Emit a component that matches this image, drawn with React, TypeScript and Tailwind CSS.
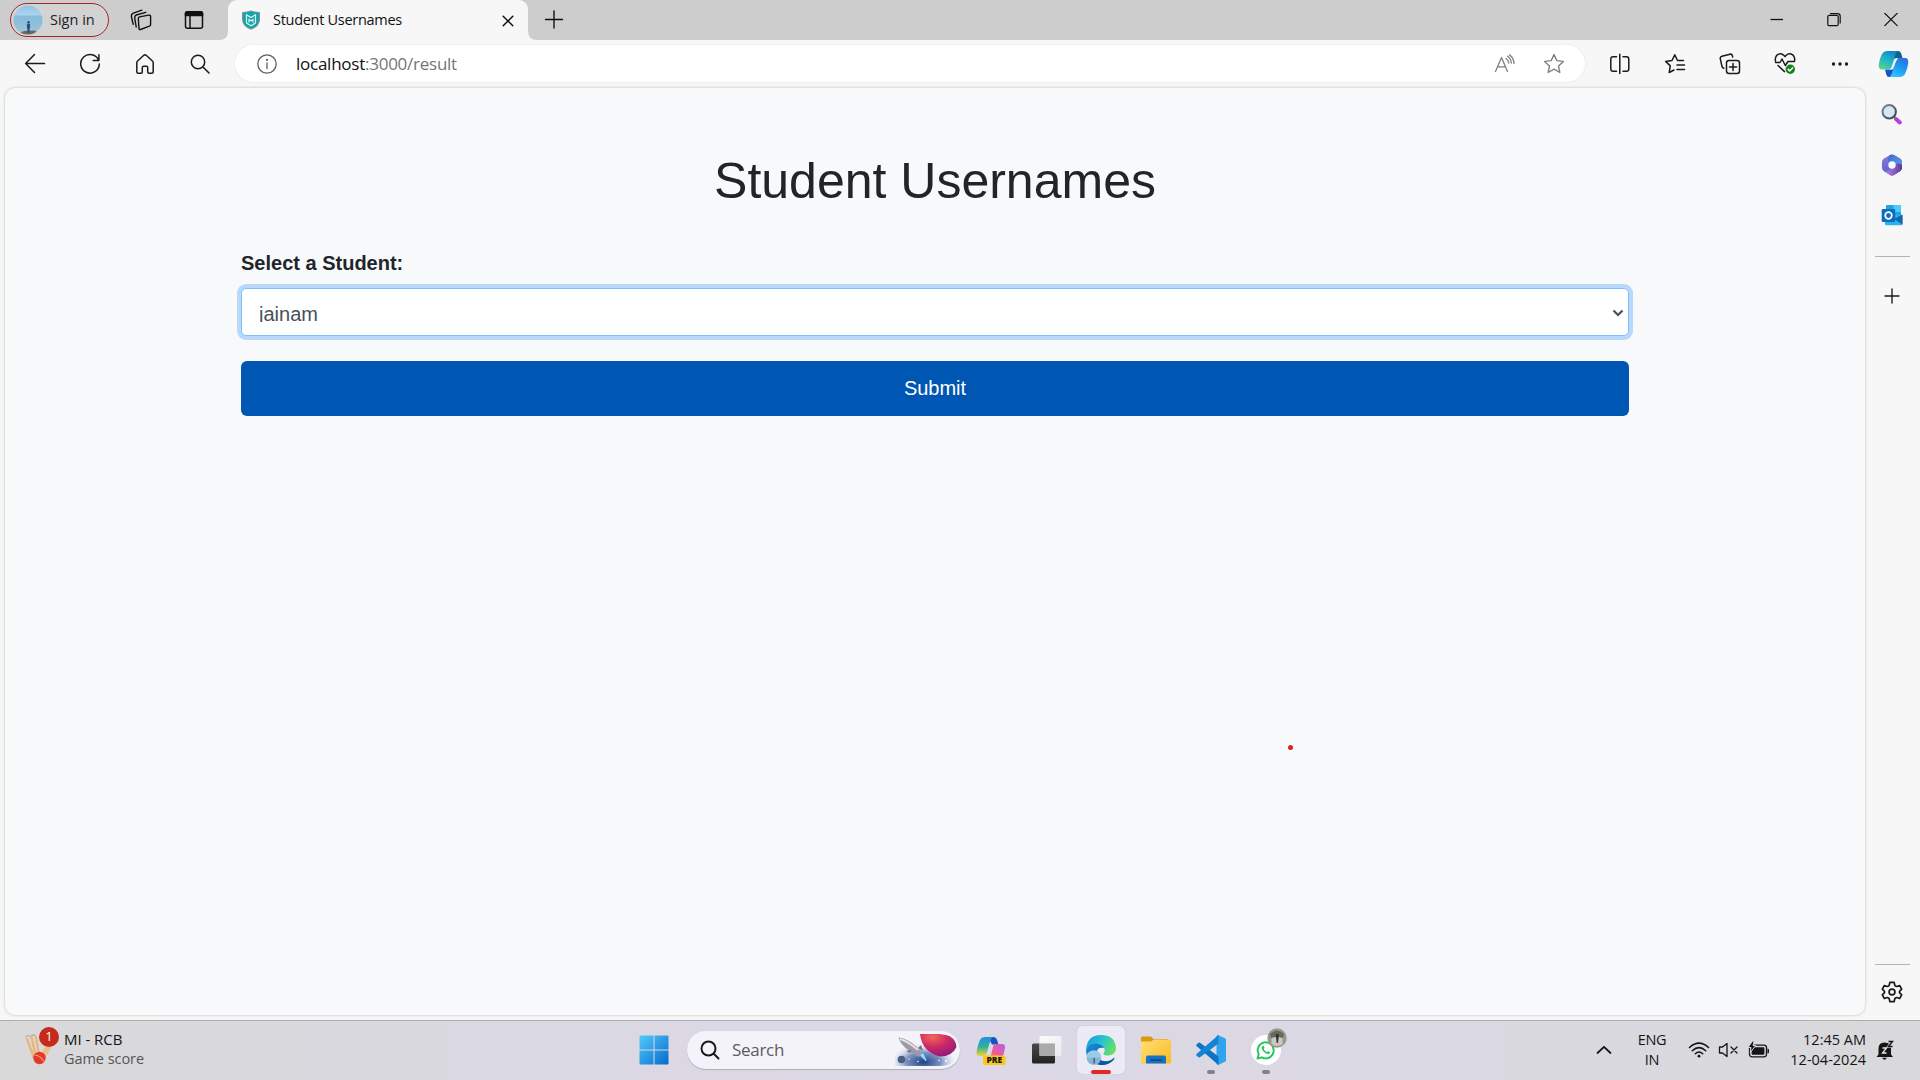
import React from 'react';

const ui = "font-['Open_Sans','Noto_Sans',sans-serif]";

type P = { className?: string; children: React.ReactNode; w?: number; h?: number; sw?: number };

/* Stroked outline icon on a box measured in real pixels */
function Line({ w = 24, h = 24, sw = 1.4, className = '', children }: P) {
  return (
    <svg
      width={w}
      height={h}
      viewBox={`0 0 ${w} ${h}`}
      fill="none"
      stroke="currentColor"
      strokeWidth={sw}
      strokeLinecap="round"
      strokeLinejoin="round"
      className={`shrink-0 ${className}`}
    >
      {children}
    </svg>
  );
}

function Slot({ children, className = 'w-[55px]' }: { children: React.ReactNode; className?: string }) {
  return <div className={`flex h-full shrink-0 items-center justify-center ${className}`}>{children}</div>;
}

function Avatar() {
  return (
    <svg width="30" height="30" viewBox="0 0 30 30" className="shrink-0">
      <defs>
        <clipPath id="av"><circle cx="15" cy="15" r="14.5" /></clipPath>
        <linearGradient id="avg" x1="0" y1="0" x2="0" y2="1">
          <stop offset="0" stopColor="#8fc3ea" />
          <stop offset=".32" stopColor="#a9d3ee" />
          <stop offset=".38" stopColor="#86bcdc" />
          <stop offset="1" stopColor="#9cc7d8" />
        </linearGradient>
      </defs>
      <g clipPath="url(#av)">
        <rect width="30" height="30" fill="url(#avg)" />
        <path d="M4 29 L11 26 L22 25.500 L26 29 V30 H4Z" fill="#6d6762" />
        <circle cx="15.500" cy="17.300" r="1.200" fill="#3d4350" />
        <path d="M13.900 18.700h3.200v4.500h-.5v4.500h-2.200v-4.500h-.5Z" fill="#2c4f80" />
      </g>
    </svg>
  );
}

function TabStrip() {
  return (
    <div className="flex h-10 bg-[#cdcdcd] text-[#111]">
      <div className="ml-2.5 mt-[3px] flex h-[34px] w-[99px] items-center rounded-full border-[1.5px] border-[#a4262c] bg-[#d3d3d3] pl-[2px]">
        <Avatar />
        <span className="ml-[7px] text-[14.5px] leading-5 text-[#222]">Sign in</span>
      </div>
      <Slot className="ml-[5px] w-[54px]">
        <Line w={22} h={22} sw={1.4}>
          <path d="M8.300 9.800 Q8.200 8.400 9.500 7.900 L18.800 6.100 Q20.600 5.900 20.600 7.500 V15.500 Q20.600 16.800 19.400 17.200 L10.500 20.500 Q9.100 20.900 9 19.400Z" />
          <path d="M6.200 18 L4.700 9 Q4.500 6.800 6.200 6 L15.800 3.300" />
          <path d="M3.200 15.300 L1.400 7.500 Q1 5.200 2.800 4.300 L11.800 1.200" />
        </Line>
      </Slot>
      <Slot className="w-[51px]">
        <Line w={20} h={20} sw={1.5}>
          <rect x="1.500" y="1.700" width="17" height="16.600" rx="2" />
          <path d="M1.500 3.700 Q1.500 1.700 3.500 1.700 H16.500 Q18.500 1.700 18.500 3.700 V5.500 H1.500Z" fill="currentColor" />
          <path d="M6 6 V18" />
        </Line>
      </Slot>
      <div className="relative ml-[9px] flex w-[300px] items-center rounded-t-[9px] bg-[#f7f7f7]">
        <svg className="absolute -left-[9px] bottom-0" width="9" height="9" viewBox="0 0 9 9"><path d="M9 0V9H0Q9 9 9 0Z" fill="#f7f7f7" /></svg>
        <svg className="absolute -right-[9px] bottom-0" width="9" height="9" viewBox="0 0 9 9"><path d="M0 0V9H9Q0 9 0 0Z" fill="#f7f7f7" /></svg>
        <svg width="20" height="20" viewBox="0 0 20 20" className="ml-[13px] shrink-0">
          <path d="M1 2.200 Q6 1.800 10 .6 Q14 1.800 19 2.200 V10 Q18.500 16.500 10 19.700 Q1.500 16.500 1 10Z" fill="#7c9296" />
          <path d="M2.200 3 Q6 2.700 10 1.600 Q14 2.700 17.800 3 V10 Q17.400 15.700 10 18.600 Q2.600 15.700 2.200 10Z" fill="#12a5a9" />
          <path d="M5.500 13 V4.800 L10 7.500 L14.500 4.800 V13 L10 15.800Z M8 12.500 V9.500 L10 10.800 L12 9.500 V12.500" fill="none" stroke="#d9f5f5" strokeWidth="1.200" />
        </svg>
        <span className="ml-[12px] text-[14.5px] leading-5 tracking-[-0.29px] whitespace-nowrap text-[#111]">Student Usernames</span>
        <Line w={12} h={12} sw={1.5} className="absolute top-[15px] left-[274px]">
          <path d="M1.200 1.200 L10.800 10.800 M10.800 1.200 L1.200 10.800" />
        </Line>
      </div>
      <Slot className="ml-[1px] w-[50px]">
        <Line w={20} h={20} sw={1.4}><path d="M10 1 V18 M1.500 9.500 H18.500" /></Line>
      </Slot>
      <div className="ml-auto flex">
        <Slot className="w-[57px]"><Line w={14} h={14} sw={1.3}><path d="M.5 6.500 H13" strokeLinecap="butt" /></Line></Slot>
        <Slot className="w-[57px]">
          <Line w={14} h={14} sw={1.2}>
            <rect x=".8" y="2.300" width="10.400" height="10.400" rx="1.500" />
            <path d="M3.500 .6 H10.500 Q13.200 .6 13.200 3.300 V10" />
          </Line>
        </Slot>
        <Slot className="w-[58px]"><Line w={14} h={14} sw={1.2}><path d="M.8 .3 L13.200 12.700 M13.200 .3 L.8 12.700" /></Line></Slot>
      </div>
    </div>
  );
}

function CopilotLogo() {
  return (
    <svg width="31" height="28" viewBox="0 0 31 28">
      <defs>
        <linearGradient id="cp1" x1=".7" y1="0" x2=".2" y2="1"><stop offset="0" stopColor="#0c84c6" /><stop offset=".5" stopColor="#22b5c4" /><stop offset="1" stopColor="#58d38b" /></linearGradient>
        <linearGradient id="cp2" x1=".8" y1="0" x2=".3" y2="1"><stop offset="0" stopColor="#2a6fdc" /><stop offset=".5" stopColor="#1c9cf0" /><stop offset="1" stopColor="#33c4fb" /></linearGradient>
      </defs>
      <path d="M15 1 H20.500 Q22.500 1 23.200 3.500 L24.500 8 H19 Q16 8 15.200 11Z" fill="#10628f" />
      <path d="M16 27 H11 Q9 27 8.300 24.500 L7 19.500 H12.500 Q15 19.500 15.800 16.500Z" fill="#1b4fd0" />
      <path d="M9.500 1 H20.500 Q18.300 1.300 17.400 4.500 L13.800 16.800 Q13 19.500 10 19.500 H4 Q.3 19.500 .8 14.500 Q1.500 8.500 4 4 Q5.800 1 9.500 1Z" fill="url(#cp1)" />
      <path d="M21.500 27 H11 Q13 26.500 14 23 L17.400 11 Q18.300 8 21 8 H27 Q30.700 8 30.200 13.300 Q29.500 19 27 24 Q25.300 27 21.500 27Z" fill="url(#cp2)" />
      <path d="M17.200 9.500 Q17.800 8.200 20 8.200 L18 11.500 L15 19 Q14.500 19.800 11.500 19.400 Q13.300 19 14 16.500Z" fill="#eef7fb" />
    </svg>
  );
}

function Toolbar() {
  return (
    <div className="flex h-[47px] items-center bg-[#f7f7f7] pl-[7px] text-[#1b1b1b]">
      <Slot><Line w={22} h={22} sw={1.5}><path d="M20.500 10.500 H2 M10.500 1.500 L1.600 10.500 L10.500 19.500" /></Line></Slot>
      <Slot><Line w={22} h={22} sw={1.5}><path d="M19.700 7.500 A9.300 9.300 0 1 0 20.300 11 M19.900 1.800 V7.600 H14.200" /></Line></Slot>
      <Slot>
        <Line w={22} h={22} sw={1.5}>
          <path d="M2.800 9.800 Q2.800 8.700 3.600 8 L9.800 2.300 Q11 1.300 12.200 2.300 L18.400 8 Q19.200 8.700 19.200 9.800 V19 Q19.200 20.300 17.900 20.300 H15 Q13.700 20.300 13.700 19 V14.500 Q13.700 13.200 12.400 13.200 H9.600 Q8.300 13.200 8.300 14.500 V19 Q8.300 20.300 7 20.300 H4.100 Q2.800 20.300 2.800 19Z" />
        </Line>
      </Slot>
      <Slot><Line w={22} h={22} sw={1.5}><circle cx="9" cy="9" r="6.700" /><path d="M14 14 L20 20" /></Line></Slot>
      <div className="ml-[8px] flex h-[37px] w-[1350px] items-center rounded-full bg-white shadow-[0_0_3px_rgba(0,0,0,0.08)]">
        <Line w={22} h={22} sw={1.3} className="ml-[21px] text-[#5f5f5f]">
          <circle cx="11" cy="11" r="9.200" /><path d="M11 10 V15.500" /><circle cx="11" cy="6.800" r=".5" fill="currentColor" />
        </Line>
        <span className="ml-[18px] text-[17px] leading-6 tracking-[-0.25px] whitespace-nowrap text-[#111]">
          localhost<span className="text-[#757575]">:3000/result</span>
        </span>
        <div className="mr-[6px] ml-auto flex h-full items-center text-[#808080]">
          <Slot className="w-[49px]">
            <Line w={22} h={20} sw={1.3}>
              <path d="M1.500 17.500 L7.500 3.500 L13.500 17.500 M3.700 12.800 H11.300" />
              <path d="M12 4.500 Q14.500 6 14.800 9 M13.500 2.300 Q17 4.500 17.300 9 M15.500 .9 Q19.800 4 20 9.500" />
            </Line>
          </Slot>
          <Slot className="w-[50px]">
            <Line w={22} h={22} sw={1.4}>
              <path d="M11 1.500 L13.800 7.600 L20.400 8.400 L15.500 12.900 L16.800 19.500 L11 16.200 L5.200 19.500 L6.500 12.900 L1.600 8.400 L8.200 7.600Z" />
            </Line>
          </Slot>
        </div>
      </div>
      <div className="ml-[7px] flex h-full items-center">
        <Slot>
          <Line w={22} h={22} sw={1.5}>
            <path d="M7.500 3.700 H4 Q1.800 3.700 1.800 6 V16 Q1.800 18.300 4 18.300 H7.500 M14 3.700 H17.500 Q19.800 3.700 19.800 6 V16 Q19.800 18.300 17.500 18.300 H14 M10.800 1.300 V20.500" />
          </Line>
        </Slot>
        <Slot>
          <Line w={22} h={22} sw={1.5}>
            <path d="M19.500 7.500 H13.500 L10.800 1.800 L8 7.500 L1.600 8.400 L6.300 12.900 L5.200 19.500 L10 17 M13 12 H20.500 M13 16.500 H20.500" />
          </Line>
        </Slot>
        <Slot>
          <Line w={22} h={22} sw={1.5}>
            <rect x="7.500" y="7.500" width="13" height="13" rx="2.500" />
            <path d="M14 10.500 V17.500 M10.500 14 H17.500 M4.800 15.300 Q3.300 14.900 3 13.500 L1.300 5.800 Q.9 3.800 2.900 3.300 L11 1.200 Q12.800 .8 13.300 2.500 L13.700 4" />
          </Line>
        </Slot>
        <Slot>
          <Line w={22} h={23} sw={1.5}>
            <path d="M1.500 9 Q.6 5.200 3.200 2.900 Q7 .3 10 3.500 L11 4.600 L12 3.500 Q15 .3 18.800 2.900 Q21.400 5.200 20.500 9 M1.500 10.500 H6 L8 7 L11.300 13.500 L14 9.500 H20.500 M4 13.500 L10.500 19.600" />
            <circle cx="16.300" cy="17.300" r="4.700" fill="#13801a" stroke="none" />
            <path d="M14.200 17.400 L15.700 18.900 L18.500 15.900" stroke="#fff" />
          </Line>
        </Slot>
        <Slot>
          <svg width="18" height="6" viewBox="0 0 18 6" fill="#1b1b1b"><circle cx="2.500" cy="3" r="1.700" /><circle cx="9" cy="3" r="1.700" /><circle cx="15.500" cy="3" r="1.700" /></svg>
        </Slot>
        <Slot className="w-[53px]"><CopilotLogo /></Slot>
      </div>
    </div>
  );
}

function Sidebar() {
  return (
    <aside className="flex w-[54px] shrink-0 flex-col items-center text-[#1b1b1b]">
      <svg width="22" height="22" viewBox="0 0 22 22" className="mt-[16px]">
        <defs>
          <linearGradient id="mgl" x1="0" y1="0" x2="1" y2="1"><stop offset="0" stopColor="#8a8a8a" /><stop offset="1" stopColor="#3d3d3d" /></linearGradient>
        </defs>
        <path d="M15 16 L18.800 19.500" stroke="#bb3ce6" strokeWidth="4" strokeLinecap="round" />
        <path d="M12.500 13 L14.500 15" stroke="#777" strokeWidth="2" />
        <circle cx="8.200" cy="8.800" r="6.700" fill="#cfe8f7" stroke="url(#mgl)" strokeWidth="2" />
      </svg>
      <svg width="22" height="22" viewBox="0 0 22 22" className="mt-[29px]">
        <defs>
          <linearGradient id="m1" x1="0" y1="0" x2="0" y2="1"><stop offset="0" stopColor="#8d7bdc" /><stop offset="1" stopColor="#5a5fd0" /></linearGradient>
          <linearGradient id="m2" x1="0" y1="0" x2="1" y2="1"><stop offset="0" stopColor="#4a62c8" /><stop offset="1" stopColor="#55a9f2" /></linearGradient>
          <linearGradient id="m3" x1="0" y1="0" x2="1" y2="0"><stop offset="0" stopColor="#c189e8" /><stop offset="1" stopColor="#5b3b9e" /></linearGradient>
        </defs>
        <path d="M9 1 Q11 0 13 1 L19 4.500 Q21 5.800 21 8 V14 Q21 16 19 17.300 L13 21 Q11 22 9 21 L3 17.300 Q1 16 1 14 V8 Q1 5.800 3 4.500Z" fill="url(#m1)" />
        <path d="M9 1 Q11 0 13 1 L19 4.500 Q21 5.800 21 8 V13.500 L11 8.500 L7 8 Q6.500 3 9 1Z" fill="url(#m2)" />
        <path d="M21 11 V14 Q21 16 19 17.300 L13 21 Q11 22 9 21 L3 17.300 Q8 18 11 14 L15 10.500 Q18 8 21 11Z" fill="url(#m3)" />
        <circle cx="11" cy="11" r="3.700" fill="#f7f7f7" />
      </svg>
      <svg width="22" height="22" viewBox="0 0 22 22" className="mt-[28px]">
        <rect x="5" y="1" width="15" height="15" rx="1" fill="#1fa3e8" />
        <path d="M12.500 1 H20 V8 H12.500Z" fill="#4ccaf8" />
        <path d="M4 11 H21.500 V20 Q21.500 21.200 20.300 21.200 H5.200 Q4 21.200 4 20Z" fill="#29b4ee" />
        <path d="M21.500 10.500 V20.500 L13 15Z" fill="#1466a8" />
        <rect x=".7" y="5" width="13.500" height="13" rx="1.300" fill="#0f6cbd" />
        <circle cx="7.500" cy="11.500" r="3.300" fill="none" stroke="#fff" strokeWidth="1.700" />
      </svg>
      <div className="mt-[30px] h-px w-[35px] bg-[#b4b4b4]" />
      <Line w={16} h={16} sw={1.4} className="mt-[31px]"><path d="M8 1 V15 M1 8 H15" /></Line>
      <div className="mt-auto h-px w-[35px] bg-[#b4b4b4]" />
      <Line w={24} h={24} sw={1.7} className="mt-[15px] mb-[16px]">
        <path d="M9.900 2.300 h4.200 l.7 2.900 q.2 .8 1.100 1 l1 .3 l2.700 -1 l2.100 3.600 -2 2 q-.7 .9 0 1.800 l2 2 -2.100 3.600 -2.700 -1 -1 .3 q-.9 .2 -1.100 1 l-.7 2.900 h-4.200 l-.7 -2.900 q-.2 -.8 -1.100 -1 l-1 -.3 -2.700 1 -2.100 -3.600 2 -2 q.7 -.9 0 -1.800 l-2 -2 2.100 -3.600 2.700 1 1 -.3 q.9 -.2 1.100 -1Z" />
        <circle cx="12" cy="12" r="2.900" />
      </Line>
    </aside>
  );
}

function StudentPage() {
  return (
    <main className="mt-px mb-[5px] ml-[5px] flex w-[1860px] shrink-0 flex-col rounded-[10px] bg-[#f8f9fb] px-[236px] font-['Liberation_Sans',Arial,sans-serif] text-[#212529] shadow-[0_0_3px_rgba(0,0,0,0.25)]">
      <h1 className="mt-[63px] text-center text-[50px] leading-[60px]">Student Usernames</h1>
      <label className="mt-[37px] block text-[20px] leading-[30px] font-bold">Select a Student:</label>
      <div className="mt-[10px] flex h-[48px] items-center justify-between rounded-[5px] border border-[#80bdff] bg-white pr-[4px] pl-[17px] text-[#495057] shadow-[0_0_0_4px_#b9d8fa]">
        <div className="mt-[2px] h-[17px] overflow-hidden text-[20px] leading-[19px]">jainam</div>
        <Line w={12} h={8} sw={2.2} className="mt-[1px]"><path d="M1.500 1.500 L6 6 L10.500 1.500" strokeLinecap="butt" strokeLinejoin="miter" /></Line>
      </div>
      <button className="mt-[25px] h-[55px] w-full rounded-[6px] bg-[#0056b3] pb-px text-[20px] text-white">Submit</button>
      <div className="mt-[329px] ml-[1047px] size-[5px] rounded-full bg-[#e0201c]" />
    </main>
  );
}

function Widget() {
  return (
    <div className="relative w-10 shrink-0">
      <svg width="30" height="32" viewBox="0 0 30 32" className="absolute top-[12px] left-0">
        <path d="M3 6 L10 25 M7.500 4 L12 24 M12 4 L15 22" stroke="#e9b67c" strokeWidth="2.400" strokeLinecap="round" />
        <path d="M1.500 4 Q4 1.500 6 4 M7 3 Q9.500 1 11.500 3" stroke="#b9ae9c" strokeWidth="1.200" fill="none" />
        <path d="M25 13 L17 26" stroke="#efbd8c" strokeWidth="6" />
        <circle cx="15.500" cy="25" r="6.200" fill="#e23b2c" />
        <path d="M10.500 22 Q16 22 20 28.500" stroke="#ff9a87" strokeWidth="1.200" fill="none" />
      </svg>
      <div className="absolute top-[6px] left-[15px] flex size-5 items-center justify-center rounded-full bg-[#c42b1c] text-[13px] text-white">1</div>
    </div>
  );
}

function PlanetArt() {
  return (
    <svg width="63" height="34" viewBox="0 0 63 34">
      <defs>
        <radialGradient id="pl" cx=".35" cy=".15" r=".9"><stop offset="0" stopColor="#f06a55" /><stop offset=".45" stopColor="#d02a68" /><stop offset="1" stopColor="#8d1a78" /></radialGradient>
        <radialGradient id="sky" cx=".45" cy=".85" r=".55"><stop offset="0" stopColor="#1d3f86" /><stop offset=".5" stopColor="#5c77b0" stopOpacity=".8" /><stop offset="1" stopColor="#f2f1f8" stopOpacity="0" /></radialGradient>
        <clipPath id="pc"><path d="M0 1 H44 Q62 1 62 17 Q62 33 46 33 H0Z" /></clipPath>
      </defs>
      <g clipPath="url(#pc)">
        <rect width="63" height="34" fill="url(#sky)" />
        <path d="M25 1 H45 Q61 2 61.500 14 Q57 23.500 45 23.500 Q27 19 25 1Z" fill="url(#pl)" />
        <circle cx="6.500" cy="26.500" r="3.800" fill="#49617f" />
        <path d="M25 21.500 L31 27.500 L28 21Z" fill="#aee9ff" stroke="#7fd8ff" strokeWidth="1.500" />
        <path d="M3.500 4.500 Q12 5 22 14 L27 20 L24 24 L16 19 Q6 13 3.500 4.500Z" fill="#9e98a6" />
        <path d="M5 6 Q14 9 23 17" stroke="#e4e0e8" strokeWidth="2" fill="none" />
        <path d="M15 20 L11 18 L17 17Z M26 12 L28 18 L23 15Z" fill="#77707f" />
        <g fill="#fff"><circle cx="14" cy="26" r=".7" /><circle cx="23" cy="28.500" r=".8" /><circle cx="44" cy="27.500" r=".8" /><circle cx="51" cy="28" r="1" /></g>
      </g>
    </svg>
  );
}

function EdgeLogo() {
  return (
    <svg width="32" height="32" viewBox="0 0 32 32">
      <defs>
        <linearGradient id="e1" x1="0" y1=".2" x2="1" y2=".6"><stop offset="0" stopColor="#199bdc" /><stop offset=".5" stopColor="#2bc3d2" /><stop offset="1" stopColor="#6be05a" /></linearGradient>
        <linearGradient id="e2" x1="0" y1="0" x2="1" y2="1"><stop offset="0" stopColor="#1b8fe0" /><stop offset="1" stopColor="#0b4f97" /></linearGradient>
      </defs>
      <path d="M1 16 Q2 1 16 1 Q30 1 31 14 Q31 21 23.500 21.500 Q18 21.500 18.500 19.500 Q20.500 17.500 19.500 14.800 Q18 11 12 10.500 Q4 10.500 1 16Z" fill="url(#e1)" />
      <path d="M1 16 Q3.500 9 11.500 9.500 Q18 10.500 19 14 Q12 12.500 11.500 19 Q12.500 27 21 27.500 Q26 27.500 29 24 Q25 31 16 31 Q1.500 30 1 16Z" fill="url(#e2)" />
      <path d="M10 19 Q11.500 27.500 21 27.500 Q26 27 29.500 23.500 Q30 25 27.500 27 Q23 31.500 15 31 Q8 27 10 19Z" fill="#0d559f" />
      <circle cx="8.800" cy="23.500" r="7.300" fill="#9ccbe8" />
      <path d="M1.800 23.500 H15.900 Q15 30.700 8.800 30.800 Q2.500 30.500 1.800 23.500Z" fill="#86b6d2" />
      <path d="M9.200 24 V29.500" stroke="#38577c" strokeWidth="1.400" />
    </svg>
  );
}

function Taskbar() {
  return (
    <footer className="flex h-[60px] shrink-0 border-t border-[#adadb0] bg-linear-to-r from-[#d9d9da] via-[#dcd8e7] to-[#d9d9db] text-[#151515]">
      <div className="flex w-[626px] pl-[24px]">
        <Widget />
        <div className="pt-[7.500px] text-[14.5px] leading-[20px] tracking-[-0.05px] whitespace-nowrap">
          <p className="text-[15px]">MI - RCB</p>
          <p className="text-[#555]">Game score</p>
        </div>
      </div>
      <div className="flex h-full items-center pb-px">
        <Slot>
          <svg width="30" height="30" viewBox="0 0 30 30">
            <defs><linearGradient id="win" gradientUnits="userSpaceOnUse" x1="0" y1="0" x2="30" y2="30"><stop offset="0" stopColor="#55ccfb" /><stop offset="1" stopColor="#0368cd" /></linearGradient></defs>
            <path d="M.5 1.500 Q.5 .5 1.500 .5 H14.500 V14.500 H.5Z M15.500 .5 H28.500 Q29.500 .5 29.500 1.500 V14.500 H15.500Z M.5 15.500 H14.500 V29.500 H1.500 Q.5 29.500 .5 28.500Z M15.500 15.500 H29.500 V28.500 Q29.500 29.500 28.500 29.500 H15.500Z" fill="url(#win)" />
          </svg>
        </Slot>
        <div className="ml-[6px] flex h-[38px] w-[273px] items-center rounded-full bg-[#f4f3f9] pr-[2px] pl-[13px] shadow-[0_1px_1px_rgba(0,0,0,0.2)]">
          <Line w={20} h={20} sw={2} className="text-[#1b1b1b]"><circle cx="8.500" cy="8.500" r="7" /><path d="M13.800 13.800 L18.500 18.500" /></Line>
          <span className="ml-[12px] text-[17px] leading-6 tracking-[-0.3px] text-[#5c5c60]">Search</span>
          <div className="ml-auto"><PlanetArt /></div>
        </div>
        <Slot className="ml-[3px] w-[55px]">
          <svg width="32" height="32" viewBox="0 0 32 32">
            <defs>
              <linearGradient id="p1" x1="0" y1="0" x2="0" y2="1"><stop offset="0" stopColor="#2390e0" /><stop offset=".5" stopColor="#2fae9c" /><stop offset="1" stopColor="#f0d62e" /></linearGradient>
              <linearGradient id="p2" x1="1" y1="0" x2=".2" y2="1"><stop offset="0" stopColor="#b561e8" /><stop offset=".6" stopColor="#ee5b98" /><stop offset="1" stopColor="#f98b52" /></linearGradient>
            </defs>
            <path d="M13 3 H18 Q21 3 22 6 L23.500 10.500 H17Z" fill="#1553c0" />
            <path d="M10 3 H18 Q16 4 15 7.500 L12 18 Q11 22 8 22 H4 Q1 22 1.500 18 Q3 10 5 6 Q6.500 3 10 3Z" fill="url(#p1)" />
            <path d="M20 10 H27 Q30.500 10 30 14 Q29 20 27 24 Q25 27 22 27 H13 Q15 25 16 21 L18 13 Q18.700 10 20 10Z" fill="url(#p2)" />
            <rect x="8" y="21.500" width="22.500" height="9.500" rx="1.500" fill="#ffc61a" />
            <text x="19.300" y="29.300" textAnchor="middle" fontSize="8.500" fontWeight="800" fontFamily="Open Sans, sans-serif" fill="#1b1b1b">PRE</text>
          </svg>
        </Slot>
        <Slot>
          <svg width="32" height="32" viewBox="0 0 32 32">
            <defs>
              <linearGradient id="tv" x1="0" y1="0" x2="0" y2="1"><stop offset="0" stopColor="#4a4a4a" /><stop offset="1" stopColor="#222" /></linearGradient>
              <linearGradient id="tw" x1="0" y1="0" x2="1" y2="1"><stop offset="0" stopColor="#fff" stopOpacity=".9" /><stop offset="1" stopColor="#eee" stopOpacity=".8" /></linearGradient>
            </defs>
            <rect x="2" y="9.500" width="23" height="20" rx="1.500" fill="url(#tv)" />
            <rect x="9.500" y="2" width="22" height="20" rx="1.500" fill="url(#tw)" />
            <rect x="9.500" y="9.500" width="15.500" height="12.500" fill="#aaa" />
          </svg>
        </Slot>
        <div className="relative ml-[4px] flex size-[48px] items-center justify-center rounded-[5px] bg-[#eceaf4] shadow-[0_0_1px_rgba(0,0,0,0.25)]">
          <EdgeLogo />
          <div className="absolute bottom-0 left-[14px] h-[4px] w-[20px] rounded-full bg-[#e02a22]" />
        </div>
        <Slot className="ml-[3px] w-[55px]">
          <svg width="32" height="30" viewBox="0 0 32 30">
            <defs><linearGradient id="fo" x1="0" y1="0" x2="1" y2="1"><stop offset="0" stopColor="#ffe07a" /><stop offset="1" stopColor="#fbb91e" /></linearGradient></defs>
            <path d="M1 3 Q1 1.500 2.500 1.500 H11 L13.500 4 H28 V9 H1Z" fill="#d99a12" />
            <path d="M1 6.500 H11 L14 4.500 H29.500 Q31 4.500 31 6 V27 Q31 28.500 29.500 28.500 H2.500 Q1 28.500 1 27Z" fill="url(#fo)" />
            <path d="M6 28.500 V22.500 Q6 20.500 8 20.500 H24 Q26 20.500 26 22.500 V28.500Z" fill="#1572c4" />
            <rect x="10" y="24.300" width="12" height="1.600" rx=".8" fill="#0b4a86" />
          </svg>
        </Slot>
        <div className="relative flex h-[48px] w-[55px] items-center justify-center">
          <svg width="32" height="32" viewBox="0 0 32 32">
            <path d="M23 1 L30 4.300 Q31 4.800 31 6 V26 Q31 27.200 30 27.700 L23 31 L21.500 30 V2Z" fill="#2fa3ee" />
            <path d="M1.500 10.500 L3.500 8.800 Q4.300 8.300 5 8.800 L23.500 22.500 V31 L1.500 12Q1 11.300 1.500 10.500Z" fill="#0b75c5" />
            <path d="M1.500 21.500 L3.500 23.200 Q4.300 23.700 5 23.200 L23.500 9.500 V1 L1.500 20Q1 20.700 1.500 21.500Z" fill="#1584d4" />
          </svg>
          <div className="absolute bottom-0 left-[23.500px] h-[4px] w-[8px] rounded-full bg-[#82808c]" />
        </div>
        <div className="relative flex h-[48px] w-[55px] items-center justify-center">
          <div className="flex size-[30px] items-center justify-center rounded-full bg-white">
            <svg width="20" height="20" viewBox="0 0 20 20" fill="none" stroke="#25c35d" strokeWidth="1.900">
              <path d="M1.500 18.500 L2.700 14.200 A8 8 0 1 1 5.800 17.300Z" strokeLinejoin="round" />
              <path d="M6.300 6.300 Q7.300 5 8 6.500 L8.500 7.800 L7.700 9 Q8.800 11.300 11 12.200 L12.200 11.300 L14 12.200 Q14.300 13.300 12.800 14 Q10.500 14.500 8 12 Q5.500 9.500 5.700 7.500Z" fill="#25c35d" stroke="none" />
            </svg>
          </div>
          <svg width="20" height="20" viewBox="0 0 20 20" className="absolute top-[2px] left-[29px]">
            <circle cx="10" cy="10" r="9.700" fill="#96988f" />
            <path d="M3 6 Q10 -1 17 6 L16 10 H4Z" fill="#656b58" />
            <path d="M4.500 10 Q10 8 15.500 10 V16 Q10 20 4.500 16Z" fill="#c9c7be" />
            <path d="M8.500 6 H12 L11 15 H9.800Z" fill="#33352e" />
          </svg>
          <div className="absolute bottom-0 left-[23.500px] h-[4px] w-[8px] rounded-full bg-[#82808c]" />
        </div>
      </div>
      <div className="ml-auto flex h-full items-center pb-px">
        <Line w={16} h={10} sw={1.8}><path d="M1.500 8 L8 1.800 L14.500 8" /></Line>
        <div className="ml-[19px] w-[42px] text-center text-[14.5px] leading-[20px] tracking-[-0.3px]">ENG<br />IN</div>
        <Line w={22} h={18} sw={1.5} className="ml-[15px]">
          <path d="M1.500 6.500 Q11 -2.200 20.500 6.500 M4.300 9.800 Q11 3.500 17.700 9.800 M7.300 12.800 Q11 9.300 14.700 12.800" />
          <circle cx="11" cy="15.200" r="1.400" fill="currentColor" stroke="none" />
        </Line>
        <Line w={22} h={18} sw={1.3} className="ml-[8px]">
          <path d="M1.500 6 H4.500 L9 2.500 V15.500 L4.500 12 H1.500Z M13 6 L19 12 M19 6 L13 12" />
        </Line>
        <svg width="22" height="18" viewBox="0 0 22 18" className="ml-[8px]">
          <rect x="1.500" y="4.200" width="17" height="11.600" rx="2.500" fill="none" stroke="#151515" strokeWidth="1.300" />
          <rect x="3.600" y="6.300" width="12.800" height="7.400" rx="1.200" fill="#151515" />
          <path d="M19.500 7.500 Q21 7.500 21 9 V11 Q21 12.500 19.500 12.500Z" fill="#151515" />
          <path d="M4.500 0 L0 6.500 H3 L2.200 11.500 L7.800 4.500 H5 L6 0Z" fill="#151515" stroke="#d9d9dc" strokeWidth="1" />
        </svg>
        <div className="ml-[18px] w-[78px] text-right text-[14.5px] leading-[20px] whitespace-nowrap">
          12:45 AM<br />12-04-2024
        </div>
        <svg width="20" height="21" viewBox="0 0 20 21" className="mr-[24px] ml-[10px]">
          <path d="M2.500 14.500 V8.500 Q2.500 2.500 8.500 2.500 Q15 2.500 15 8.500 V14.500 L17 17 H.5Z" fill="#151515" />
          <path d="M6 17.800 H11 Q8.500 21.500 6 17.800Z" fill="#151515" />
          <path d="M6.500 8 H10.500 L6.500 13 H10.500" fill="none" stroke="#e6e6e8" strokeWidth="1.300" />
          <path d="M12.500 1.500 H16.500 L12.500 6.500 H16.500" fill="none" stroke="#d9d9db" strokeWidth="2.600" />
          <path d="M12.500 1.500 H16.500 L12.500 6.500 H16.500" fill="none" stroke="#151515" strokeWidth="1.400" />
        </svg>
      </div>
    </footer>
  );
}

export default function App() {
  return (
    <div className={`flex h-[1080px] w-[1920px] flex-col overflow-hidden bg-[#f7f7f7] ${ui}`}>
      <TabStrip />
      <Toolbar />
      <div className="flex min-h-0 flex-1">
        <StudentPage />
        <Sidebar />
      </div>
      <Taskbar />
    </div>
  );
}
